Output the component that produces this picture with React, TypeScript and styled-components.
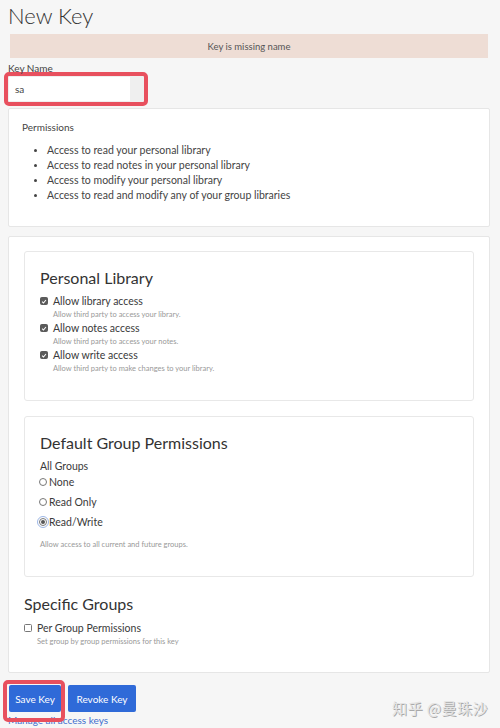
import React from "react";
import styled, { createGlobalStyle } from "styled-components";

const Global = createGlobalStyle`
  html, body { margin: 0; padding: 0; background: #f6f6f6; }
  body { font-family: Lato, "Open Sans", "Noto Sans CJK SC", sans-serif; color: #3a3a3a; }
  * { box-sizing: border-box; }
`;

const Page = styled.div`
  position: relative;
  width: 500px;
  height: 728px;
  overflow: hidden;
  padding: 0 10px 0 8px;
`;

const Title = styled.h1`
  margin: 2px 0 0 0;
  font-size: 22px;
  line-height: 28px;
  font-weight: 300;
  color: #333;
`;

const Alert = styled.div`
  margin: 4px 2px 0 2px;
  height: 24px;
  background: #eeddd5;
  color: #555;
  font-size: 9.5px;
  display: flex;
  align-items: center;
  justify-content: center;
`;

const Label = styled.div`
  margin-top: 4px;
  font-size: 10px;
  line-height: 12px;
  color: #444;
`;

const Highlight = styled.div`
  margin: -2px 0 0 -4px;
  width: 144px;
  height: 34px;
  border: 4px solid #e8505e;
  border-radius: 5px;
  background: #efefef;
  padding: 1px;
  display: flex;
`;

const TextInput = styled.div`
  width: 121px;
  height: 24px;
  background: #fff;
  font-size: 10px;
  padding-left: 6px;
  display: flex;
  align-items: center;
  color: #444;
`;

const Panel = styled.div<{ $top: number; $pad?: string }>`
  margin-top: ${(p) => p.$top}px;
  background: #fff;
  border: 1px solid #e6e6e6;
  border-radius: 2px;
  padding: ${(p) => p.$pad || "15px"};
`;

const SmallHeading = styled.div`
  font-size: 10px;
  line-height: 14px;
  color: #444;
`;

const List = styled.ul`
  margin: 9px 0 0 0;
  padding-left: 25px;
  font-size: 10.5px;
  line-height: 15px;
  color: #444;
  li::marker { font-size: 9px; }
`;

const Box = styled.div<{ $top: number }>`
  margin-top: ${(p) => p.$top}px;
  border: 1px solid #e8e8e8;
  border-radius: 3px;
  padding: 16px 15px 25px 15px;
`;

const H3 = styled.h3<{ $top?: number }>`
  margin: ${(p) => p.$top || 0}px 0 0 0;
  font-size: 16px;
  line-height: 20px;
  font-weight: 400;
  color: #333;
`;

const CheckRow = styled.div<{ $top?: number }>`
  margin-top: ${(p) => p.$top || 0}px;
  display: flex;
  align-items: center;
  font-size: 10.5px;
  line-height: 14px;
  color: #3a3a3a;
`;

const Sub = styled.div<{ $indent: number }>`
  padding-left: ${(p) => p.$indent}px;
  font-size: 7.5px;
  line-height: 13px;
  color: #999;
`;

const CheckBoxMark = styled.span<{ $checked: boolean }>`
  width: 8px;
  height: 8px;
  margin-right: 5px;
  border-radius: 1.5px;
  display: inline-flex;
  align-items: center;
  justify-content: center;
  background: ${(p) => (p.$checked ? "#5b5b5b" : "#fff")};
  border: 1px solid ${(p) => (p.$checked ? "#5b5b5b" : "#777")};
  flex-shrink: 0;
`;

const RadioRow = styled.div`
  display: flex;
  align-items: center;
  height: 20px;
  font-size: 10.5px;
  color: #3a3a3a;
`;

const RadioMark = styled.span<{ $on: boolean }>`
  width: 8px;
  height: 8px;
  border-radius: 50%;
  border: 1px solid #777;
  background: #fff;
  margin-right: 2px;
  margin-left: -1px;
  display: inline-flex;
  align-items: center;
  justify-content: center;
  flex-shrink: 0;
  outline: ${(p) => (p.$on ? "1.5px solid #9db7e6" : "none")};
  outline-offset: 1px;
  &::after {
    content: "";
    display: ${(p) => (p.$on ? "block" : "none")};
    width: 4px;
    height: 4px;
    border-radius: 50%;
    background: #555;
  }
`;

const GroupLabel = styled.div`
  margin-top: 7px;
  font-size: 10.5px;
  line-height: 12px;
  color: #3a3a3a;
`;

const Help = styled.div`
  margin-top: 7px;
  font-size: 7.5px;
  line-height: 12px;
  color: #999;
`;

const Buttons = styled.div`
  margin-top: 12px;
  display: flex;
  gap: 7px;
  padding-left: 1px;
`;

const Button = styled.button<{ $marked?: boolean; $w: number }>`
  position: relative;
  width: ${(p) => p.$w}px;
  height: 27px;
  padding: 0;
  border: none;
  border-radius: 2px;
  background: #2f6ad8;
  color: #fff;
  font-family: inherit;
  font-size: 10px;
  &::after {
    content: "";
    display: ${(p) => (p.$marked ? "block" : "none")};
    position: absolute;
    left: -6px;
    right: -4px;
    top: -5px;
    bottom: -10px;
    border: 4px solid #e8505e;
    border-radius: 5px;
    pointer-events: none;
  }
`;

const Link = styled.a`
  display: block;
  margin-top: 2px;
  font-size: 10px;
  line-height: 12px;
  color: #3f6fcf;
  text-decoration: none;
`;

const Watermark = styled.div`
  position: absolute;
  right: 12px;
  bottom: 10px;
  font-family: "Noto Sans CJK SC", sans-serif;
  font-size: 15px;
  color: #e4e4e4;
  text-shadow: 1px 1px 0 #a9a9a9;
  letter-spacing: 0.5px;
`;

const Check = ({ checked }: { checked: boolean }) => (
  <CheckBoxMark $checked={checked}>
    {checked && (
      <svg width="7" height="7" viewBox="0 0 8 8">
        <path d="M1.5 4.2 L3.3 6 L6.6 2" stroke="#fff" strokeWidth="1.4" fill="none" />
      </svg>
    )}
  </CheckBoxMark>
);

const personal = [
  ["Allow library access", "Allow third party to access your library."],
  ["Allow notes access", "Allow third party to access your notes."],
  ["Allow write access", "Allow third party to make changes to your library."],
];

export default function App() {
  return (
    <Page>
      <Global />
      <Title>New Key</Title>
      <Alert>Key is missing name</Alert>
      <Label>Key Name</Label>
      <Highlight>
        <TextInput>sa</TextInput>
      </Highlight>
      <Panel $top={2} $pad="11px 13px 23px 13px">
        <SmallHeading>Permissions</SmallHeading>
        <List>
          <li>Access to read your personal library</li>
          <li>Access to read notes in your personal library</li>
          <li>Access to modify your personal library</li>
          <li>Access to read and modify any of your group libraries</li>
        </List>
      </Panel>
      <Panel $top={9} $pad="14px 15px 24px 15px">
        <Box $top={0}>
          <H3>Personal Library</H3>
          {personal.map(([l, s], i) => (
            <div key={l}>
              <CheckRow $top={i === 0 ? 6 : 0}>
                <Check checked />
                {l}
              </CheckRow>
              <Sub $indent={13}>{s}</Sub>
            </div>
          ))}
        </Box>
        <Box $top={15}>
          <H3>Default Group Permissions</H3>
          <GroupLabel>All Groups</GroupLabel>
          <RadioRow>
            <RadioMark $on={false} />
            None
          </RadioRow>
          <RadioRow>
            <RadioMark $on={false} />
            Read Only
          </RadioRow>
          <RadioRow>
            <RadioMark $on />
            Read/Write
          </RadioRow>
          <Help>Allow access to all current and future groups.</Help>
        </Box>
        <H3 $top={17}>Specific Groups</H3>
        <CheckRow $top={7}>
          <Check checked={false} />
          Per Group Permissions
        </CheckRow>
        <Sub $indent={13}>Set group by group permissions for this key</Sub>
      </Panel>
      <Buttons>
        <Button $marked $w={52}>Save Key</Button>
        <Button $w={68}>Revoke Key</Button>
      </Buttons>
      <Link href="#">Manage all access keys</Link>
      <Watermark>知乎 @曼珠沙</Watermark>
    </Page>
  );
}
